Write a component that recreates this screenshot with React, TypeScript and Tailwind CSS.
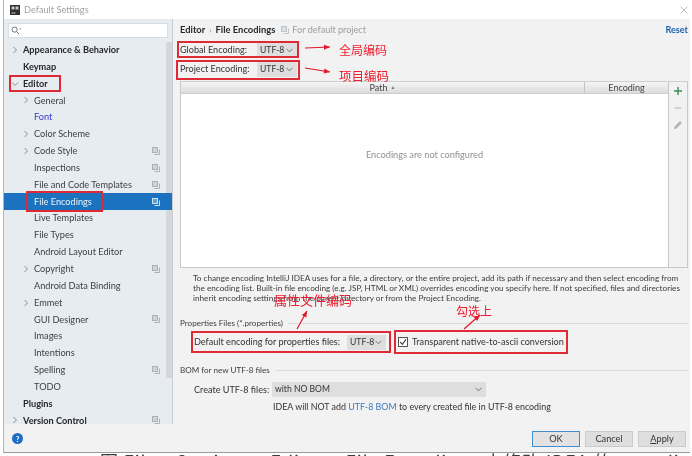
const F = "font-['Lato','Noto_Sans',sans-serif]";

function Chevron({ open }: { open?: boolean }) {
  return (
    <svg width="8" height="8" viewBox="0 0 8 8" fill="none" stroke="#8a8f94" strokeWidth="1">
      {open ? <path d="M1 2.5 L4 5.5 L7 2.5" /> : <path d="M2.5 1 L5.5 4 L2.5 7" />}
    </svg>
  );
}

function Copy({ light }: { light?: boolean }) {
  const c = light ? "#cfe0f0" : "#a9b2ba";
  return (
    <svg width="8" height="8" viewBox="0 0 8 8" fill="none" stroke={c} strokeWidth="1">
      <rect x="0.5" y="0.5" width="5" height="5" fill={c} fillOpacity="0.4" />
      <path d="M7.5 2.5 V7.5 H2.5" />
    </svg>
  );
}

type Row = { t: string; lvl: 0 | 1; arrow?: "open" | "closed"; copy?: boolean; bold?: boolean; blue?: boolean; sel?: boolean };

const rows: Row[] = [
  { t: "Appearance & Behavior", lvl: 0, arrow: "closed", bold: true },
  { t: "Keymap", lvl: 0, bold: true },
  { t: "Editor", lvl: 0, arrow: "open", bold: true },
  { t: "General", lvl: 1, arrow: "closed" },
  { t: "Font", lvl: 1, blue: true },
  { t: "Color Scheme", lvl: 1, arrow: "closed" },
  { t: "Code Style", lvl: 1, arrow: "closed", copy: true },
  { t: "Inspections", lvl: 1, copy: true },
  { t: "File and Code Templates", lvl: 1, copy: true },
  { t: "File Encodings", lvl: 1, copy: true, sel: true },
  { t: "Live Templates", lvl: 1 },
  { t: "File Types", lvl: 1 },
  { t: "Android Layout Editor", lvl: 1 },
  { t: "Copyright", lvl: 1, arrow: "closed", copy: true },
  { t: "Android Data Binding", lvl: 1 },
  { t: "Emmet", lvl: 1, arrow: "closed" },
  { t: "GUI Designer", lvl: 1, copy: true },
  { t: "Images", lvl: 1 },
  { t: "Intentions", lvl: 1 },
  { t: "Spelling", lvl: 1, copy: true },
  { t: "TODO", lvl: 1 },
  { t: "Plugins", lvl: 0, bold: true },
  { t: "Version Control", lvl: 0, arrow: "closed", bold: true, copy: true },
];

function TreeRow({ r }: { r: Row }) {
  return (
    <div className={`h-[16.85px] flex items-center text-[9.2px] ${r.sel ? "bg-[#1b73c0] text-[#e8f1f8]" : r.blue ? "text-[#3a3ad0]" : r.bold ? "text-[#26282a]" : "text-[#3c3f42]"} ${r.bold ? "font-bold" : ""}`}>
      <div className={`flex items-center justify-center w-[8px] shrink-0 ${r.lvl === 0 ? "ml-[7px]" : "ml-[18px]"}`}>
        {r.arrow && <Chevron open={r.arrow === "open"} />}
      </div>
      <span className="ml-[4px] flex-1 whitespace-nowrap">{r.t}</span>
      {r.copy && <div className="mr-[12px] flex"><Copy light={r.sel} /></div>}
    </div>
  );
}

function Combo({ label, w }: { label: string; w: string }) {
  return (
    <div className={`${w} h-[15px] shrink-0 bg-[#dedede] flex items-center justify-between pl-[3px] pr-[4px] text-[8.6px] text-[#333] whitespace-nowrap`}>
      <span>{label}</span>
      <svg width="7" height="5" viewBox="0 0 7 5" fill="none" stroke="#666" strokeWidth="0.9"><path d="M0.5 0.8 L3.5 3.8 L6.5 0.8" /></svg>
    </div>
  );
}

function Box({ className }: { className: string }) {
  return <div className={`absolute border-2 border-[#dd2a35] ${className}`} />;
}

function Arrow({ x1, y1, x2, y2 }: { x1: number; y1: number; x2: number; y2: number }) {
  const a = Math.atan2(y2 - y1, x2 - x1);
  const p = (d: number, o: number) => `${x2 - d * Math.cos(a) - o * Math.sin(a)},${y2 - d * Math.sin(a) + o * Math.cos(a)}`;
  return (
    <>
      <line x1={x1} y1={y1} x2={x2} y2={y2} stroke="#e0182a" strokeWidth="1.2" />
      <polygon points={`${x2},${y2} ${p(6, 2.6)} ${p(6, -2.6)}`} fill="#e0182a" />
    </>
  );
}

function Note({ children, className }: { children: string; className: string }) {
  return <div className={`absolute whitespace-nowrap text-[#ee1c2e] font-['Noto_Sans_CJK_SC',sans-serif] ${className}`}>{children}</div>;
}

export default function App() {
  return (
    <div className={`relative w-[692px] h-[456px] overflow-hidden bg-white blur-[0.3px] ${F}`}>
      {/* clipped caption below the window */}
      <div className="absolute left-[100px] top-[449px] whitespace-nowrap text-[18px] leading-[24px] tracking-[0.9px] text-[#3a3a3a] font-['Noto_Sans_CJK_SC',sans-serif]">图 File→Settings→Editor→File Encodings 中修改 IDEA 的 encoding</div>
      <div className="relative h-[453px] ml-[3px] mr-[2px] flex flex-col border-b border-[#9a9a9a] border-l border-l-[#b5b5b5]">
        {/* title bar */}
        <div className="h-[19px] shrink-0 bg-white flex items-center pl-[6px] pr-[2px]">
          <svg width="10" height="10" viewBox="0 0 10 10">
            <rect width="10" height="10" fill="#2b2f33" />
            <rect x="1.5" y="1.5" width="3" height="3" fill="#c9c9c9" />
            <rect x="5.5" y="1.5" width="3" height="3" fill="#c9c9c9" />
            <rect x="1.5" y="7.5" width="4" height="1" fill="#c9c9c9" />
          </svg>
          <span className="ml-[4px] text-[9.2px] text-[#a0a3a6] flex-1">Default Settings</span>
          <svg width="8" height="8" viewBox="0 0 8 8" stroke="#b8b8b8" strokeWidth="0.9"><path d="M0.5 0.5 L7.5 7.5 M7.5 0.5 L0.5 7.5" /></svg>
        </div>
        {/* body */}
        <div className="flex-1 flex min-h-0 bg-[#f2f2f2]">
          <div className="w-[169px] shrink-0 bg-[#e7ecf1] border-r border-[#c9cdd0] flex flex-col pt-[4px]">
            <div className="mx-[4px] h-[15px] shrink-0 bg-white border border-[#dadde0] flex items-center pl-[2px]">
              <svg width="11" height="9" viewBox="0 0 11 9" fill="none" stroke="#70767b" strokeWidth="1">
                <circle cx="3.6" cy="3.6" r="2.6" />
                <path d="M5.6 5.6 L8 8" />
                <path d="M8.5 2.5 L10.5 2.5 L9.5 3.8 Z" fill="#70767b" stroke="none" />
              </svg>
            </div>
            <div className="relative mt-[3.5px] flex-1 min-h-0 overflow-hidden">
              {/* sidebar scrollbar */}
              <div className="absolute right-0 top-0 h-[336px] w-[6px] bg-[#d4d8dc]" />
              <div className="relative">
                {rows.map((r) => <TreeRow key={r.t} r={r} />)}
              </div>
            </div>
          </div>
          {/* right */}
          <div className="flex-1 min-w-0 flex flex-col pl-[7px] pr-[2px] text-[#333] text-[9.1px]">
            <div className="h-[22px] shrink-0 flex items-center">
              <span className="font-bold text-[#26282a] text-[9.4px]">Editor</span>
              <span className="mx-[4px] text-[#888] text-[8px]">›</span>
              <span className="font-bold text-[#26282a] text-[9.4px]">File Encodings</span>
              <span className="ml-[6px] mr-[3px] flex opacity-70"><Copy /></span>
              <span className="text-[#9a9da0]">For default project</span>
              <span className="ml-auto font-bold text-[#1c5fae]">Reset</span>
            </div>
            <div className="h-[16px] mt-[1px] shrink-0 flex items-center">
              <span className="w-[77px]">Global Encoding:</span>
              <Combo label="UTF-8" w="w-[40px]" />
            </div>
            <div className="h-[18px] shrink-0 mt-[2px] flex items-center">
              <span className="w-[77px]">Project Encoding:</span>
              <Combo label="UTF-8" w="w-[40px]" />
            </div>
            {/* table */}
            <div className="mt-[3px] h-[187px] shrink-0 flex border border-[#c8c8c8] border-t-[#cfcfcf]">
              <div className="flex-1 flex flex-col min-w-0">
                <div className="h-[12px] shrink-0 flex bg-gradient-to-b from-[#f5f5f5] to-[#dcdcdc] text-[9px] text-[#444] border-b border-[#cdcdcd]">
                  <div className="w-[404px] border-r border-[#c4c4c4] flex items-center justify-center gap-[3px] leading-none">Path<span className="text-[5px] text-[#777]">▲</span></div>
                  <div className="flex-1 flex items-center justify-center leading-none">Encoding</div>
                </div>
                <div className="flex-1 bg-white flex items-center justify-center text-[9.2px] text-[#8e9092] pb-[52px]">Encodings are not configured</div>
              </div>
              <div className="w-[19px] shrink-0 border-l border-[#c8c8c8] flex flex-col items-center pt-[4px] gap-[7px] bg-[#f2f2f2]">
                <svg width="10" height="10" viewBox="0 0 10 10" stroke="#3a8f55" strokeWidth="1.4"><path d="M5 1 V9 M1 5 H9" /></svg>
                <svg width="10" height="10" viewBox="0 0 10 10" stroke="#bbb" strokeWidth="1.2"><path d="M1.5 5 H8.5" /></svg>
                <svg width="10" height="10" viewBox="0 0 10 10" fill="#b5b5b5"><path d="M7 1 L9 3 L3.5 8.5 L1 9 L1.5 6.5 Z" /></svg>
              </div>
            </div>
            {/* help */}
            <div className="ml-[13px] mt-[5px] text-[8.2px] leading-[10px] text-[#3c3c3c] whitespace-nowrap">
              <div>To change encoding IntelliJ IDEA uses for a file, a directory, or the entire project, add its path if necessary and then select encoding from</div>
              <div>the encoding list. Built-in file encoding (e.g. JSP, HTML or XML) overrides encoding you specify here. If not specified, files and directories</div>
              <div>inherit encoding settings from the parent directory or from the Project Encoding.</div>
            </div>
            {/* properties */}
            <div className="mt-[14px] h-[12px] shrink-0 flex items-center gap-[5px] text-[8.1px] text-[#3c3c3c]">
              <span className="whitespace-nowrap">Properties Files (*.properties)</span>
              <div className="flex-1 h-px bg-[#d8dde2]" />
            </div>
            <div className="mt-[4px] h-[18px] shrink-0 ml-[13px] flex items-center">
              <span className="w-[154px] pl-[1px] whitespace-nowrap">Default encoding for properties files:</span>
              <Combo label="UTF-8" w="w-[39px]" />
              <div className="ml-[12px] w-[10px] h-[10px] border border-[#555] bg-white flex items-center justify-center">
                <svg width="8" height="8" viewBox="0 0 7 7" fill="none" stroke="#444" strokeWidth="1"><path d="M1 3.5 L3 5.5 L6.2 1" /></svg>
              </div>
              <span className="ml-[4px] whitespace-nowrap">Transparent native-to-ascii conversion</span>
            </div>
            {/* BOM */}
            <div className="mt-[13px] h-[12px] shrink-0 flex items-center gap-[5px] text-[8.1px] text-[#3c3c3c]">
              <span className="whitespace-nowrap">BOM for new UTF-8 files</span>
              <div className="flex-1 h-px bg-[#dcdcdc]" />
            </div>
            <div className="mt-[6px] h-[15px] shrink-0 ml-[13px] flex items-center">
              <span className="w-[79px] pl-[1px] whitespace-nowrap">Create UTF-8 files:</span>
              <Combo label="with NO BOM" w="w-[214px]" />
            </div>
            <div className="mt-[3px] ml-[93px] text-[8.9px] whitespace-nowrap">
              IDEA will NOT add <span className="text-[#3a78b8]">UTF-8 BOM</span> to every created file in UTF-8 encoding
            </div>
          </div>
        </div>
        {/* footer */}
        <div className="h-[28px] shrink-0 bg-[#f2f2f2] flex items-start pl-[8px] pr-[4px] pt-[7px] text-[9.2px]">
          <div className="mt-[2px] w-[11px] h-[11px] rounded-full bg-[#1c6fc4] text-white text-[8px] font-bold flex items-center justify-center leading-none">?</div>
          <div className="ml-auto flex gap-[5px] text-[#333]">
            <div className="w-[48px] h-[16px] bg-[#e2e2e2] border border-[#3f8fd2] flex items-center justify-center">OK</div>
            <div className="w-[48px] h-[16px] bg-[#dedede] border border-[#cbcbcb] flex items-center justify-center">Cancel</div>
            <div className="w-[48px] h-[16px] bg-[#dedede] border border-[#cbcbcb] flex items-center justify-center"><span><span className="underline">A</span>pply</span></div>
          </div>
        </div>
      </div>

      {/* annotations */}
      <Box className="left-[9px] top-[75px] w-[52px] h-[17px]" />
      <Box className="left-[26px] top-[191px] w-[77px] h-[21px]" />
      <Box className="left-[177px] top-[41px] w-[122px] h-[17px]" />
      <Box className="left-[176px] top-[60px] w-[124px] h-[20px]" />
      <Box className="left-[191px] top-[331px] w-[200px] h-[22px]" />
      <Box className="left-[394px] top-[330px] w-[174px] h-[24px]" />
      <svg className="absolute inset-0 pointer-events-none" width="692" height="456">
        <Arrow x1={305} y1={48} x2={330} y2={47} />
        <Arrow x1={305} y1={68} x2={330} y2={72} />
        <Arrow x1={297} y1={329} x2={307} y2={311} />
        <Arrow x1={464} y1={329} x2={480} y2={315} />
      </svg>
      <Note className="left-[339px] top-[41px] text-[12px] leading-[17px]">全局编码</Note>
      <Note className="left-[339px] top-[67px] text-[12.5px] leading-[17px]">项目编码</Note>
      <Note className="left-[274px] top-[291px] text-[13px] leading-[18px]">属性文件编码</Note>
      <Note className="left-[456px] top-[303px] text-[12px] leading-[16px]">勾选上</Note>
    </div>
  );
}
